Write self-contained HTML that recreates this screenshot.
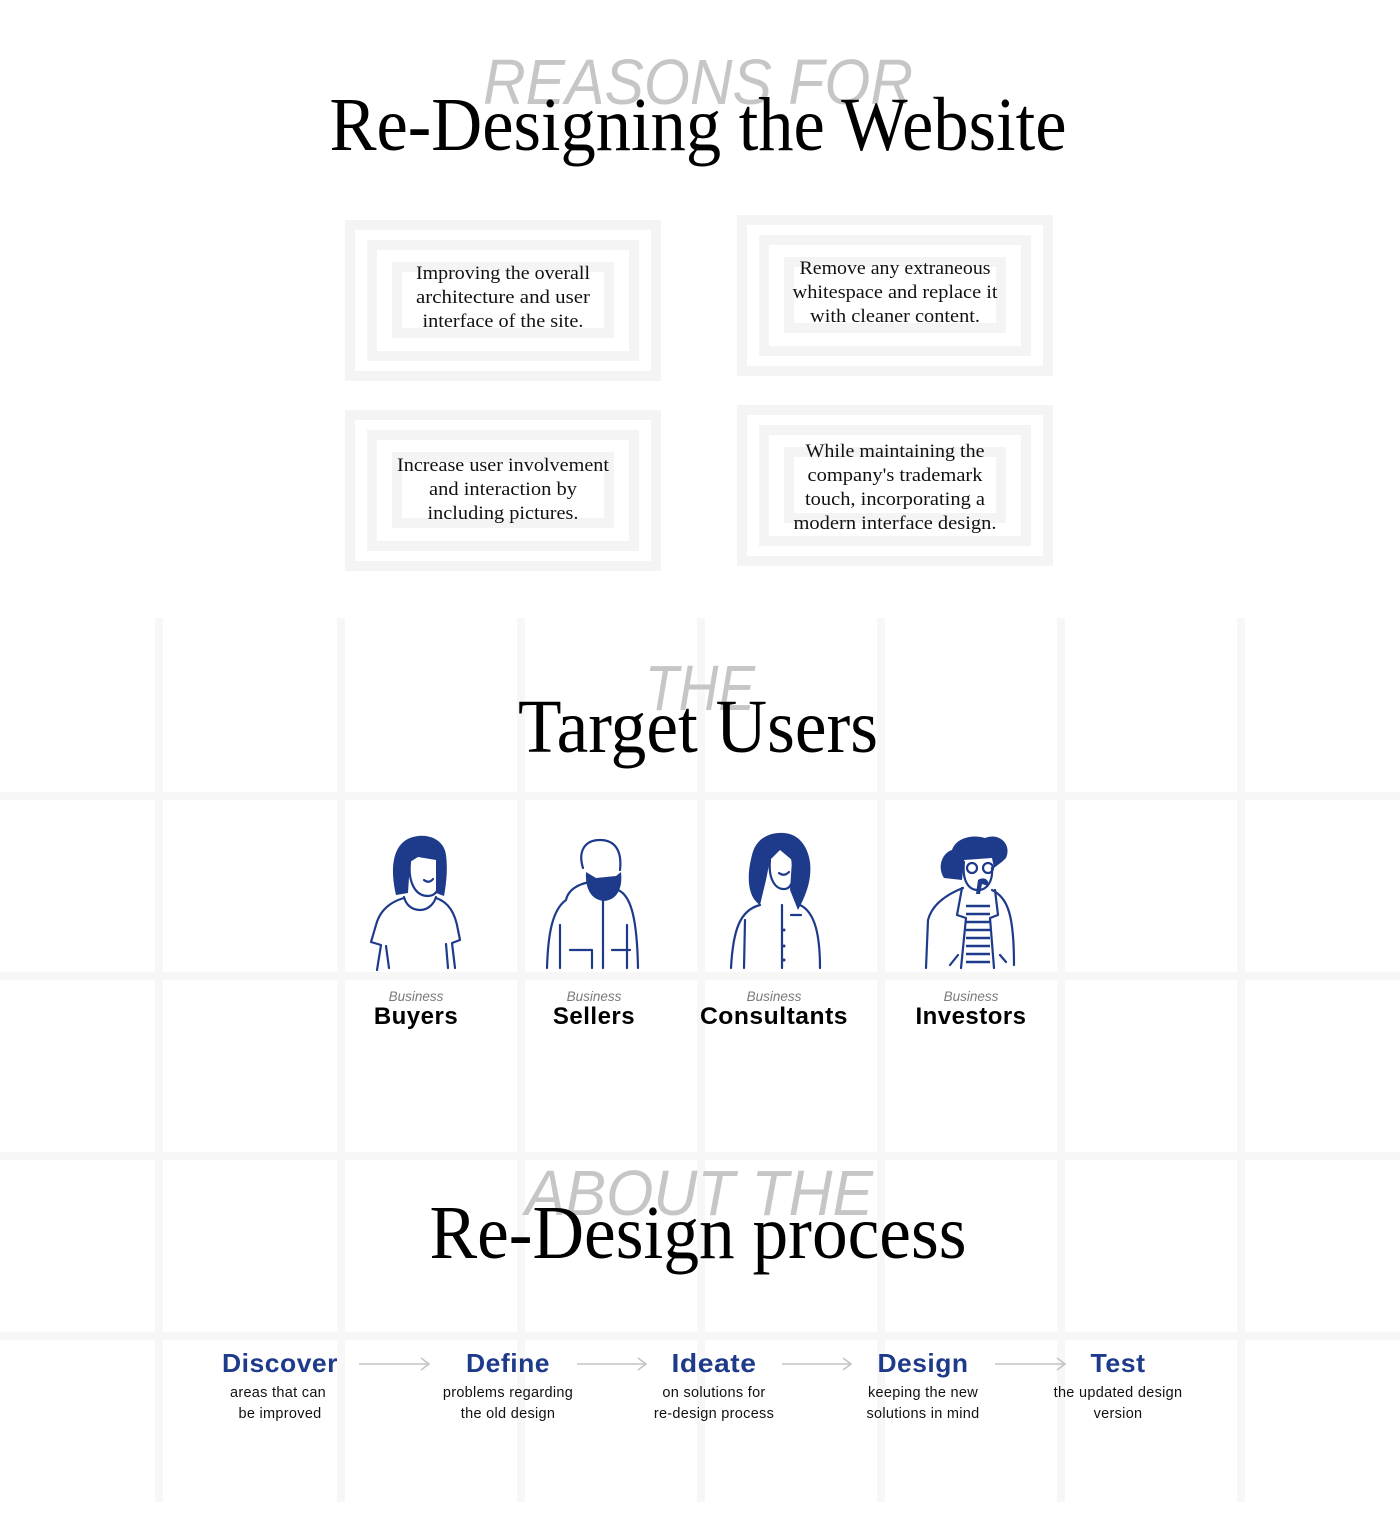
<!DOCTYPE html>
<html><head><meta charset="utf-8"><style>
html,body{margin:0;padding:0;background:#fff;}
svg{display:block}
.ttl{font-family:"Liberation Serif",serif;font-size:76px;fill:#000}
.ghost{font-family:"Liberation Sans",sans-serif;font-style:italic;font-size:64px;fill:#c6c6c6}
.bt{font-family:"Liberation Serif",serif;font-size:18.5px;fill:#111}
.biz{font-family:"Liberation Sans",sans-serif;font-style:italic;font-size:13.5px;fill:#7a7a7a}
.nm{font-family:"Liberation Sans",sans-serif;font-weight:bold;font-size:24px;fill:#000;letter-spacing:0.5px}
.ph{font-family:"Liberation Sans",sans-serif;font-weight:bold;font-size:26px;fill:#1e3a8a;letter-spacing:0.5px}
.ps{font-family:"Liberation Sans",sans-serif;font-size:14.5px;fill:#111;letter-spacing:0.3px}
.fig{fill:none;stroke:#1e3a8a;stroke-width:2.2;stroke-linecap:round;stroke-linejoin:round}
.hair{fill:#1e3a8a}
</style></head><body>
<svg width="1400" height="1534" viewBox="0 0 1400 1534" xmlns="http://www.w3.org/2000/svg">
<g fill="#f7f7f7">
<rect x="155" y="618" width="8" height="884"/>
<rect x="337" y="618" width="8" height="884"/>
<rect x="517" y="618" width="8" height="884"/>
<rect x="697" y="618" width="8" height="884"/>
<rect x="877" y="618" width="8" height="884"/>
<rect x="1057" y="618" width="8" height="884"/>
<rect x="1237" y="618" width="8" height="884"/>
<rect x="0" y="792" width="1400" height="8"/>
<rect x="0" y="972" width="1400" height="8"/>
<rect x="0" y="1152" width="1400" height="8"/>
<rect x="0" y="1332" width="1400" height="8"/>
</g>

<text class="ghost" x="698" y="104" text-anchor="middle" textLength="430" lengthAdjust="spacingAndGlyphs">REASONS FOR</text>
<text class="ttl" x="698" y="150" text-anchor="middle" textLength="737" lengthAdjust="spacingAndGlyphs">Re-Designing the Website</text>
<text class="ghost" x="700" y="710" text-anchor="middle" textLength="110" lengthAdjust="spacingAndGlyphs">THE</text>
<text class="ttl" x="698" y="752" text-anchor="middle" textLength="360" lengthAdjust="spacingAndGlyphs">Target Users</text>
<text class="ghost" x="699" y="1215" text-anchor="middle" textLength="348" lengthAdjust="spacingAndGlyphs">ABOUT THE</text>
<text class="ttl" x="698" y="1258" text-anchor="middle" textLength="537" lengthAdjust="spacingAndGlyphs">Re-Design process</text>

<g fill="none" stroke="#f4f4f4" stroke-width="10">
<g transform="translate(345,220)"><rect x="5" y="5" width="306" height="151"/><rect x="27" y="25" width="262" height="111"/><rect x="52" y="47" width="212" height="66"/></g>
<g transform="translate(737,215)"><rect x="5" y="5" width="306" height="151"/><rect x="27" y="25" width="262" height="111"/><rect x="52" y="47" width="212" height="66"/></g>
<g transform="translate(345,410)"><rect x="5" y="5" width="306" height="151"/><rect x="27" y="25" width="262" height="111"/><rect x="52" y="47" width="212" height="66"/></g>
<g transform="translate(737,405)"><rect x="5" y="5" width="306" height="151"/><rect x="27" y="25" width="262" height="111"/><rect x="52" y="47" width="212" height="66"/></g>
</g>
<g text-anchor="middle" class="bt">
<text x="503" y="279" textLength="174" lengthAdjust="spacingAndGlyphs">Improving the overall</text>
<text x="503" y="303" textLength="174" lengthAdjust="spacingAndGlyphs">architecture and user</text>
<text x="503" y="327" textLength="161" lengthAdjust="spacingAndGlyphs">interface of the site.</text>
<text x="895" y="274" textLength="191" lengthAdjust="spacingAndGlyphs">Remove any extraneous</text>
<text x="895" y="298" textLength="205" lengthAdjust="spacingAndGlyphs">whitespace and replace it</text>
<text x="895" y="322" textLength="170" lengthAdjust="spacingAndGlyphs">with cleaner content.</text>
<text x="503" y="471" textLength="212" lengthAdjust="spacingAndGlyphs">Increase user involvement</text>
<text x="503" y="495" textLength="148" lengthAdjust="spacingAndGlyphs">and interaction by</text>
<text x="503" y="519" textLength="151" lengthAdjust="spacingAndGlyphs">including pictures.</text>
<text x="895" y="457" textLength="179" lengthAdjust="spacingAndGlyphs">While maintaining the</text>
<text x="895" y="481" textLength="175" lengthAdjust="spacingAndGlyphs">company's trademark</text>
<text x="895" y="505" textLength="180" lengthAdjust="spacingAndGlyphs">touch, incorporating a</text>
<text x="895" y="529" textLength="203" lengthAdjust="spacingAndGlyphs">modern interface design.</text>
</g>

<g>
<path class="hair" d="M396 895 C390 870 392 845 410 838 C425 832 444 838 446 855 C448 870 446 885 444 896 L436 893 L436 860 L418 857 L410 862 L408 893 Z"/>
<path class="fig" d="M410 862 C408 880 414 896 428 896 C438 896 441 885 440 870 L438 858"/>
<path class="fig" d="M424 880 Q429 884 433 879"/>
<path class="fig" d="M404 897 C406 905 412 910 420 910 C428 910 434 904 436 897"/>
<path class="fig" d="M404 898 C390 902 380 910 376 925 L371 942 L381 945 L377 970"/>
<path class="fig" d="M436 898 C448 902 455 912 458 930 L460 940 L452 943 L455 968 M386 946 L389 968 M446 944 L448 968"/>
</g>
<g>
<path class="fig" d="M583 868 C578 852 584 840 600 840 C616 840 622 852 620 870"/>
<path class="hair" d="M586 872 C585 890 592 900 604 901 C616 900 623 890 621 872 L616 876 L596 878 Z"/>
<path class="fig" d="M590 882 C578 884 568 890 566 900 C552 910 548 935 547 968 M618 890 C630 895 637 915 638 968 M603 900 L603 968 M570 950 L592 950 L592 968 M612 950 L630 950 M560 925 L560 968 M627 925 L627 968"/>
</g>
<g>
<path class="hair" d="M760 905 C745 895 748 870 752 855 C756 838 770 832 784 833 C800 834 808 848 810 862 C812 880 806 895 798 910 L790 890 L792 860 L780 850 L770 860 L766 880 Z"/>
<path class="fig" d="M770 860 C768 880 776 890 785 889 C793 888 795 875 792 858"/>
<path class="fig" d="M779 873 Q784 877 789 872"/>
<path class="fig" d="M760 905 C740 910 733 930 731 968 M800 905 C815 912 820 935 820 968 M782 905 L782 968 M791 915 L801 915 M745 920 L744 968"/>
<circle cx="784" cy="930" r="1.5" class="hair"/><circle cx="784" cy="946" r="1.5" class="hair"/><circle cx="784" cy="960" r="1.5" class="hair"/>
</g>
<g>
<path class="hair" d="M944 878 C936 865 944 852 952 850 C956 838 972 834 985 838 C1000 832 1012 845 1006 858 C1000 864 996 866 994 868 L992 858 L964 860 L962 880 Z"/>
<circle cx="972" cy="868" r="5" class="fig"/><circle cx="988" cy="868" r="5" class="fig"/>
<path class="fig" d="M964 862 C962 880 968 890 978 890 C988 890 993 880 992 868"/>
<path class="hair" d="M978 880 C984 876 990 880 988 886 L982 884 L980 894 L976 894 Z"/>
<path class="fig" d="M963 888 C945 895 932 905 928 920 L926 968 M992 890 C1008 898 1014 915 1014 965 M962 888 L957 915 L966 918 L961 968 M995 890 L998 915 L990 918 L994 968 M958 955 L950 965 M1000 955 L1006 962"/>
<g stroke="#1e3a8a" stroke-width="2.5"><path d="M966 906 H990 M966 914 H990 M966 922 H990 M966 930 H990 M966 938 H990 M966 946 H990 M966 954 H990 M966 962 H990"/></g>
</g>

<g text-anchor="middle">
<text class="biz" x="416" y="1001">Business</text><text class="nm" x="416" y="1024">Buyers</text>
<text class="biz" x="594" y="1001">Business</text><text class="nm" x="594" y="1024">Sellers</text>
<text class="biz" x="774" y="1001">Business</text><text class="nm" x="774" y="1024" textLength="148" lengthAdjust="spacingAndGlyphs">Consultants</text>
<text class="biz" x="971" y="1001">Business</text><text class="nm" x="971" y="1024" textLength="111" lengthAdjust="spacingAndGlyphs">Investors</text>
</g>

<g text-anchor="middle">
<text class="ph" x="280" y="1372" textLength="116" lengthAdjust="spacingAndGlyphs">Discover</text>
<text class="ps" x="278" y="1397">areas that can</text><text class="ps" x="280" y="1418">be improved</text>
<text class="ph" x="508" y="1372" textLength="84" lengthAdjust="spacingAndGlyphs">Define</text>
<text class="ps" x="508" y="1397">problems regarding</text><text class="ps" x="508" y="1418">the old design</text>
<text class="ph" x="714" y="1372" textLength="85" lengthAdjust="spacingAndGlyphs">Ideate</text>
<text class="ps" x="714" y="1397">on solutions for</text><text class="ps" x="714" y="1418">re-design process</text>
<text class="ph" x="923" y="1372" textLength="91" lengthAdjust="spacingAndGlyphs">Design</text>
<text class="ps" x="923" y="1397">keeping the new</text><text class="ps" x="923" y="1418">solutions in mind</text>
<text class="ph" x="1118" y="1372" textLength="55" lengthAdjust="spacingAndGlyphs">Test</text>
<text class="ps" x="1118" y="1397">the updated design</text><text class="ps" x="1118" y="1418">version</text>
</g>
<g fill="none" stroke="#c4c4c4" stroke-width="1.6">
<path d="M359 1364 H429 M421 1358 L429 1364 L421 1370"/>
<path d="M577 1364 H646 M638 1358 L646 1364 L638 1370"/>
<path d="M782 1364 H851 M843 1358 L851 1364 L843 1370"/>
<path d="M995 1364 H1065 M1057 1358 L1065 1364 L1057 1370"/>
</g>
</svg>
</body></html>
